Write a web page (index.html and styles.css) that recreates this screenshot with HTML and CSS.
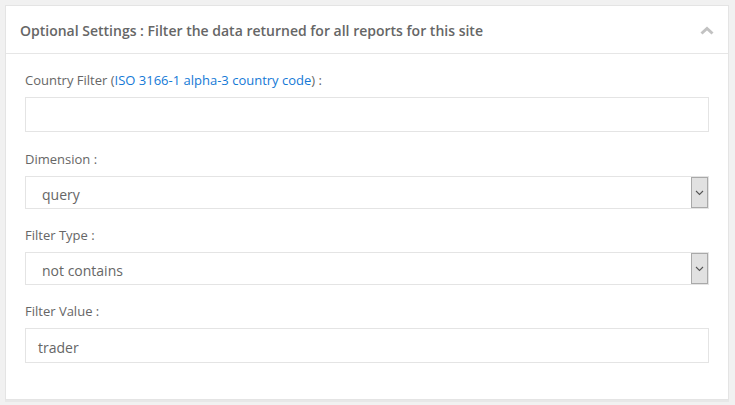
FILE: index.html
```html
<!DOCTYPE html>
<html>
<head>
<meta charset="utf-8">
<link rel="stylesheet" href="styles.css">
</head>
<body>
<div class="panel">
  <div class="panel-header">
    <span class="panel-title">Optional Settings : Filter the data returned for all reports for this site</span>
    <svg class="chevron" width="14" height="9" viewBox="0 0 14 9"><path d="M1.5 7.5 L7 2.5 L12.5 7.5" fill="none" stroke="#c2c2c2" stroke-width="3"/></svg>
  </div>
  <div class="panel-body">
    <div class="field field-first">
      <div class="label">Country Filter (<a href="#" class="link">ISO 3166-1 alpha-3 country code</a>) :</div>
      <div class="control input"></div>
    </div>
    <div class="field">
      <div class="label">Dimension :</div>
      <div class="control select"><span class="value">query</span><span class="arrow"><svg width="9" height="6" viewBox="0 0 9 6"><path d="M1 1 L4.5 4.5 L8 1" fill="none" stroke="#555" stroke-width="1.1"/></svg></span></div>
    </div>
    <div class="field">
      <div class="label">Filter Type :</div>
      <div class="control select"><span class="value">not contains</span><span class="arrow"><svg width="9" height="6" viewBox="0 0 9 6"><path d="M1 1 L4.5 4.5 L8 1" fill="none" stroke="#555" stroke-width="1.1"/></svg></span></div>
    </div>
    <div class="field">
      <div class="label">Filter Value :</div>
      <div class="control input"><span class="text">trader</span></div>
    </div>
  </div>
</div>
</body>
</html>
```
FILE: styles.css
```css
html, body {
  margin: 0;
  padding: 0;
  background: #f1f1f1;
  font-family: "Open Sans", "Liberation Sans", sans-serif;
  color: #666;
}
body {
  padding: 5px 6px 5px 5px;
}
.panel {
  background: #fff;
  border: 1px solid #e4e4e4;
  box-shadow: 0 2px 0 #e8e8e8;
  height: 395px;
  box-sizing: border-box;
}
.panel-header {
  height: 48px;
  box-sizing: border-box;
  border-bottom: 1px solid #e6e6e6;
  display: flex;
  align-items: center;
  justify-content: space-between;
  padding: 0 14px 0 14px;
}
.panel-title {
  font-size: 14px;
  font-weight: 600;
  color: #666;
  margin-top: 2px;
}
.chevron {
  display: block;
  margin-top: 2px;
}
.panel-body {
  padding: 17px 19px 0 19px;
}
.field {
  margin-bottom: 17px;
}
.field-first {
  margin-bottom: 18px;
}
.label {
  font-size: 13px;
  line-height: 18px;
  margin-bottom: 8px;
  color: #666;
}
.link {
  color: #1479d6;
  text-decoration: none;
}
.control {
  border: 1px solid #e4e4e4;
  box-sizing: border-box;
  display: flex;
  align-items: center;
  font-size: 14px;
  color: #666;
}
.input {
  height: 35px;
  padding-left: 12px;
}
.select {
  height: 33px;
  padding-left: 16px;
  justify-content: space-between;
}
.text, .value {
  color: #666;
  padding-top: 3px;
}
.arrow {
  width: 17px;
  height: 31px;
  box-sizing: border-box;
  background: #e1e1e1;
  border: 1px solid #a9a9a9;
  display: flex;
  align-items: center;
  justify-content: center;
}
.arrow svg {
  display: block;
}
```
